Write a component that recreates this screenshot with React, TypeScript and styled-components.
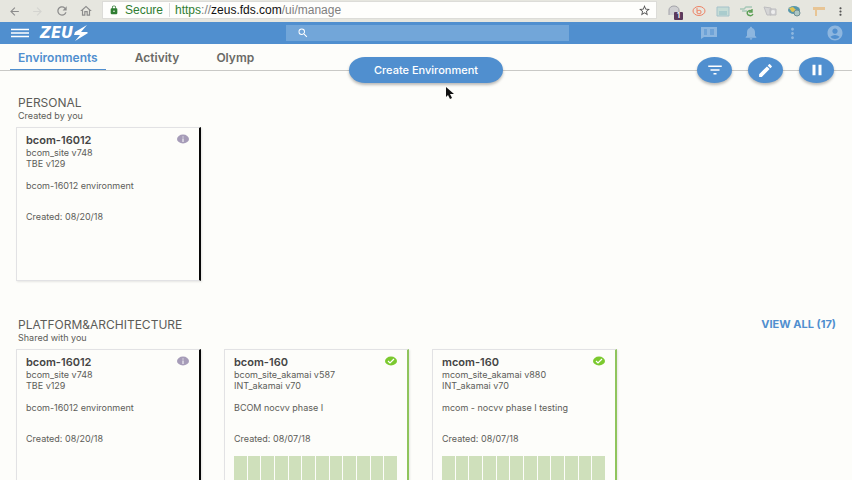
import React from "react";
import styled, { createGlobalStyle, css } from "styled-components";
import { MdArrowBack, MdArrowForward, MdRefresh, MdOutlineHome, MdLock, MdStarBorder, MdMoreVert, MdSearch, MdNotifications, MdAccountCircle, MdFilterList, MdEdit, MdPause } from "react-icons/md";

const blue = "#508fcf";
const paper = "#fdfdfa";

const GlobalStyle = createGlobalStyle`
  * { box-sizing: border-box; }
  html, body, #root { height: 100%; }
  body { margin: 0; background: ${paper}; color: #5c5c58; font-family: Inter, "Liberation Sans", sans-serif; overflow: hidden; }
  button, input { font-family: inherit; }
  h1, h2, h3, p { margin: 0; }
`;

const Page = styled.div`
  position: relative;
  height: 100%;
  overflow: hidden;
`;

const BrowserBar = styled.div`
  display: flex;
  align-items: center;
  height: 22px;
  background: #e6e6df;
`;

const PlainButton = styled.button`
  display: flex;
  align-items: center;
  justify-content: center;
  padding: 0;
  border: 0;
  background: none;
  color: inherit;
`;

const NavButtons = styled.div`
  display: flex;
  justify-content: space-between;
  width: 102px;
  padding: 0 9px 0 8px;
  color: #8c8c8c;
`;

const ForwardButton = styled(PlainButton)`
  color: #d4d4d0;
`;

const AddressBar = styled.div`
  display: flex;
  flex: 1;
  align-items: center;
  align-self: stretch;
  margin: 1px 0 3px;
  padding: 0 5px 0 6px;
  border: 1px solid #dcdcd8;
  background: #fefefc;
  color: #2f7d32;
  font-family: "Liberation Sans", sans-serif;
  font-size: 12px;
`;

const Secure = styled.span`
  margin: 0 5px 0 6px;
  padding-right: 6px;
  border-right: 1px solid #dcdcdc;
`;

const Address = styled.span`
  flex: 1;
`;

const Host = styled.span`
  color: #111;
`;

const Muted = styled.span`
  color: #808080;
`;

const StarButton = styled(PlainButton)`
  color: #555;
`;

const Extensions = styled.div`
  display: flex;
  align-items: center;
  gap: 7px;
  padding: 0 5px 0 9px;
  color: #555;
`;

const Extension = styled(PlainButton)`
  position: relative;
  width: 17px;
`;

const Count = styled.span`
  position: absolute;
  right: 0;
  bottom: -3px;
  padding: 0 3px;
  border-radius: 1px;
  background: #5b3a5c;
  color: #fff;
  font-size: 7px;
  font-weight: 700;
  line-height: 8px;
`;

const Header = styled.header`
  display: flex;
  align-items: center;
  justify-content: space-between;
  height: 22px;
  padding: 0 8px 0 11px;
  background: ${blue};
`;

const Brand = styled.div`
  display: flex;
  flex: 1;
  align-items: center;
  gap: 11px;
  color: #fff;
`;

const LogoRow = styled.div`
  display: flex;
  align-items: center;
`;

const LogoText = styled.span`
  font-family: "DejaVu Sans", sans-serif;
  font-size: 15px;
  font-style: italic;
  font-weight: 700;
  line-height: 20px;
`;

const Search = styled.label`
  display: flex;
  align-items: center;
  width: 34%;
  height: 16px;
  padding-left: 11px;
  background: #72a6d9;
  color: #fff;
`;

const SearchInput = styled.input`
  flex: 1;
  min-width: 0;
  padding: 0 6px;
  border: 0;
  outline: 0;
  background: none;
  color: inherit;
  font-size: 11px;
`;

const HeaderActions = styled.div`
  display: flex;
  flex: 1;
  justify-content: flex-end;
  gap: 25px;
  color: #8db6df;
`;

const TabBar = styled.div`
  height: 27px;
  padding: 0 10px;
  border-bottom: 1px solid #c9c9c6;
`;

const Tabs = styled.nav`
  display: flex;
  gap: 21px;
`;

const Tab = styled.a<{ $active?: boolean }>`
  height: 26px;
  padding: 5px 8px 0;
  border-bottom: 1px solid ${(p) => (p.$active ? blue : "transparent")};
  color: ${(p) => (p.$active ? blue : "#6a6a66")};
  font-size: 12px;
  font-weight: 600;
  line-height: 18px;
  text-decoration: none;
`;

const FloatingBar = styled.div`
  position: absolute;
  top: 57px;
  left: 0;
  right: 0;
  display: flex;
  justify-content: center;
`;

const RoundActions = styled.div`
  position: absolute;
  right: 18px;
  display: flex;
  gap: 16px;
`;

const raised = css`
  background: ${blue};
  color: #fff;
  box-shadow: 0 2px 3px #00000045;
`;

const CreateButton = styled.button`
  ${raised}
  width: 154px;
  height: 26px;
  padding: 0;
  border: 0;
  border-radius: 16px / 13px;
  font-size: 11px;
  font-weight: 500;
`;

const RoundButton = styled(PlainButton)`
  ${raised}
  width: 35px;
  height: 26px;
  border-radius: 50%;
`;

const Content = styled.main`
  display: flex;
  flex-direction: column;
  gap: 36px;
  padding: 24px 16px 0;
`;

const SectionHead = styled.div`
  display: flex;
  align-items: flex-start;
  justify-content: space-between;
  padding-left: 2px;
`;

const SectionTitle = styled.h2`
  font-size: 12px;
  font-weight: 400;
  line-height: 15px;
`;

const SectionNote = styled.p`
  font-size: 9px;
  line-height: 11px;
`;

const ViewAll = styled.a`
  color: ${blue};
  font-size: 11px;
  font-weight: 700;
  line-height: 15px;
  text-decoration: none;
`;

const Cards = styled.div`
  display: grid;
  grid-template-columns: repeat(auto-fill, 185px);
  column-gap: 23px;
  padding-top: 6px;
`;

const Card = styled.article<{ $edge: string }>`
  display: flex;
  flex-direction: column;
  height: 154px;
  padding: 5px 10px 0 9px;
  border: 1px solid #e2e2e4;
  border-right: 2px solid ${(p) => p.$edge};
  box-shadow: 1px 1px 2px #00000018;
  font-size: 9px;
  line-height: 11px;
`;

const CardHead = styled.div`
  display: flex;
  justify-content: space-between;
  height: 14px;
`;

const CardTitle = styled.h3`
  color: #444;
  font-size: 11px;
  font-weight: 600;
  line-height: 15px;
`;

const Description = styled.p`
  padding-top: 11px;
`;

const Created = styled.p`
  padding-top: 20px;
`;

const Blocks = styled.div`
  display: grid;
  grid-template-columns: repeat(12, 1fr);
  gap: 1px;
  flex: 1;
  margin-top: 12px;
`;

const Block = styled.span`
  background: #cfe0bb;
`;

function Logo() {
  return (
    <LogoRow>
      <LogoText>ZEU</LogoText>
      <svg width="16" height="18" viewBox="0 0 16 18" role="img" aria-label="S">
        <path d="M14 1L2 8l-1 3h6L2 17 15 9l-1-1H8z" fill="#fff" />
      </svg>
    </LogoRow>
  );
}

type Environment = { name: string; versions: string[]; description: string; created: string; ready?: boolean };

const mine: Environment = { name: "bcom-16012", versions: ["bcom_site v748", "TBE v129"], description: "bcom-16012 environment", created: "08/20/18" };
const shared: Environment[] = [
  mine,
  { name: "bcom-160", versions: ["bcom_site_akamai v587", "INT_akamai v70"], description: "BCOM nocvv phase I", created: "08/07/18", ready: true },
  { name: "mcom-160", versions: ["mcom_site_akamai v880", "INT_akamai v70"], description: "mcom - nocvv phase I testing", created: "08/07/18", ready: true },
];

function EnvironmentCard({ env }: { env: Environment }) {
  return (
    <Card $edge={env.ready ? "#8fc45c" : "#080808"}>
      <CardHead>
        <CardTitle>{env.name}</CardTitle>
        {env.ready ? (
          <svg width="12" height="12" viewBox="0 0 12 12"><ellipse cx="6" cy="6" rx="6" ry="4.4" fill="#7bc92e" /><path d="M3 6l2 2 4-4" stroke="#fff" strokeWidth="1.2" fill="none" /></svg>
        ) : (
          <svg width="12" height="12" viewBox="0 0 12 12"><ellipse cx="6" cy="6" rx="6" ry="4.4" fill="#a69cb8" /><path d="M6 5.5V9M6 3.5v1" stroke="#fff" strokeWidth="1" /></svg>
        )}
      </CardHead>
      {env.versions.map((v) => <p key={v}>{v}</p>)}
      <Description>{env.description}</Description>
      <Created>Created: {env.created}</Created>
      {env.ready && <Blocks>{Array.from({ length: 12 }, (_, i) => <Block key={i} />)}</Blocks>}
    </Card>
  );
}

export default function App() {
  return (
    <Page>
      <GlobalStyle />
      <BrowserBar>
        <NavButtons>
          <PlainButton aria-label="Back"><MdArrowBack size={13} /></PlainButton>
          <ForwardButton aria-label="Forward"><MdArrowForward size={13} /></ForwardButton>
          <PlainButton aria-label="Reload"><MdRefresh size={14} /></PlainButton>
          <PlainButton aria-label="Home"><MdOutlineHome size={14} /></PlainButton>
        </NavButtons>
        <AddressBar>
          <MdLock size={10} />
          <Secure>Secure</Secure>
          <Address>https<Muted>://</Muted><Host>zeus.fds.com</Host><Muted>/ui/manage</Muted></Address>
          <StarButton aria-label="Bookmark"><MdStarBorder size={13} /></StarButton>
        </AddressBar>
        <Extensions>
          <Extension aria-label="Ghost, 1 alert">
            <svg width="16" height="12" viewBox="0 0 16 12"><path d="M2 10V5a5 4 0 0110 0v5" fill="#d0d0d2" stroke="#a2a2a8" /></svg>
            <Count>1</Count>
          </Extension>
          <Extension aria-label="Bitly">
            <svg width="14" height="12" viewBox="0 0 14 12" fill="none" stroke="#ee8265"><ellipse cx="7" cy="6" rx="6" ry="4.5" /><path d="M5 3v5M5 6q4-2 4 1T5 8" /></svg>
          </Extension>
          <Extension aria-label="Capture">
            <svg width="14" height="12" viewBox="0 0 14 12"><path d="M1 2h12v9H1z" fill="#c6dcd6" stroke="#a5c2ca" /><path d="M3 7h8M3 9h8" stroke="#8dbbc4" fill="none" /></svg>
          </Extension>
          <Extension aria-label="Sync">
            <svg width="16" height="12" viewBox="0 0 16 12" fill="none"><path d="M1 4h4l2-2h6M3 6h5" stroke="#a6c8b8" strokeWidth="1.4" /><path d="M13 6a3 2.5 0 101 3M13 4v3h-3" stroke="#5c9f55" strokeWidth="1.4" /></svg>
          </Extension>
          <Extension aria-label="Tags">
            <svg width="15" height="12" viewBox="0 0 15 12"><path d="M1 2l7 1v7H4zM7 4h6v6H7z" fill="#d5d5d6" stroke="#bdbdc0" /><circle cx="10" cy="7" r="2" fill="#eee" /></svg>
          </Extension>
          <Extension aria-label="Inspector">
            <svg width="15" height="12" viewBox="0 0 15 12"><ellipse cx="7" cy="5" rx="6" ry="4" fill="#5798ac" /><path d="M2 3l4-1 4 4-5 1z" fill="#e1c352" /><circle cx="10" cy="8" r="3" fill="#adc7c4" stroke="#708f94" /></svg>
          </Extension>
          <Extension aria-label="Ruler">
            <svg width="14" height="12" viewBox="0 0 14 12"><path d="M1 2h12v3H5v6H3V5H1z" fill="#e8c595" /></svg>
          </Extension>
          <PlainButton aria-label="Browser menu"><MdMoreVert size={13} /></PlainButton>
        </Extensions>
      </BrowserBar>
      <Header>
        <Brand>
          <PlainButton aria-label="Menu">
            <svg width="18" height="10" viewBox="0 0 18 10"><path d="M0 1.5h18M0 5h18M0 8.5h18" stroke="#fff" strokeWidth="1.4" /></svg>
          </PlainButton>
          <Logo />
        </Brand>
        <Search><MdSearch size={12} /><SearchInput aria-label="Search environments" /></Search>
        <HeaderActions>
          <PlainButton aria-label="Feedback">
            <svg width="18" height="14" viewBox="0 0 18 14"><path d="M1 1h16v10H4l-3 2z" fill="currentColor" /><path d="M4 4h3M4 6h3M4 8h3M10 4h4M10 6h4M10 8h4" stroke={blue} /></svg>
          </PlainButton>
          <PlainButton aria-label="Notifications"><MdNotifications size={16} /></PlainButton>
          <PlainButton aria-label="More"><MdMoreVert size={17} /></PlainButton>
          <PlainButton aria-label="Account"><MdAccountCircle size={18} /></PlainButton>
        </HeaderActions>
      </Header>
      <TabBar>
        <Tabs>
          <Tab href="#environments" $active>Environments</Tab>
          <Tab href="#activity">Activity</Tab>
          <Tab href="#olymp">Olymp</Tab>
        </Tabs>
      </TabBar>
      <Content>
        <section>
          <SectionHead><div><SectionTitle>PERSONAL</SectionTitle><SectionNote>Created by you</SectionNote></div></SectionHead>
          <Cards><EnvironmentCard env={mine} /></Cards>
        </section>
        <section>
          <SectionHead>
            <div><SectionTitle>PLATFORM&amp;ARCHITECTURE</SectionTitle><SectionNote>Shared with you</SectionNote></div>
            <ViewAll href="#all">VIEW ALL (17)</ViewAll>
          </SectionHead>
          <Cards>{shared.map((env) => <EnvironmentCard key={env.name} env={env} />)}</Cards>
        </section>
      </Content>
      <FloatingBar>
        <CreateButton>Create Environment</CreateButton>
        <RoundActions>
          <RoundButton aria-label="Filter"><MdFilterList size={18} /></RoundButton>
          <RoundButton aria-label="Edit"><MdEdit size={17} /></RoundButton>
          <RoundButton aria-label="Pause"><MdPause size={18} /></RoundButton>
        </RoundActions>
      </FloatingBar>
      <Pointer width="8" height="12" viewBox="0 0 8 12"><path d="M0 0v10l2-2 2 4 2-1-2-4h4z" fill="#111" /></Pointer>
    </Page>
  );
}

const Pointer = styled.svg`
  position: absolute;
  top: 87px;
  left: 446px;
`;
